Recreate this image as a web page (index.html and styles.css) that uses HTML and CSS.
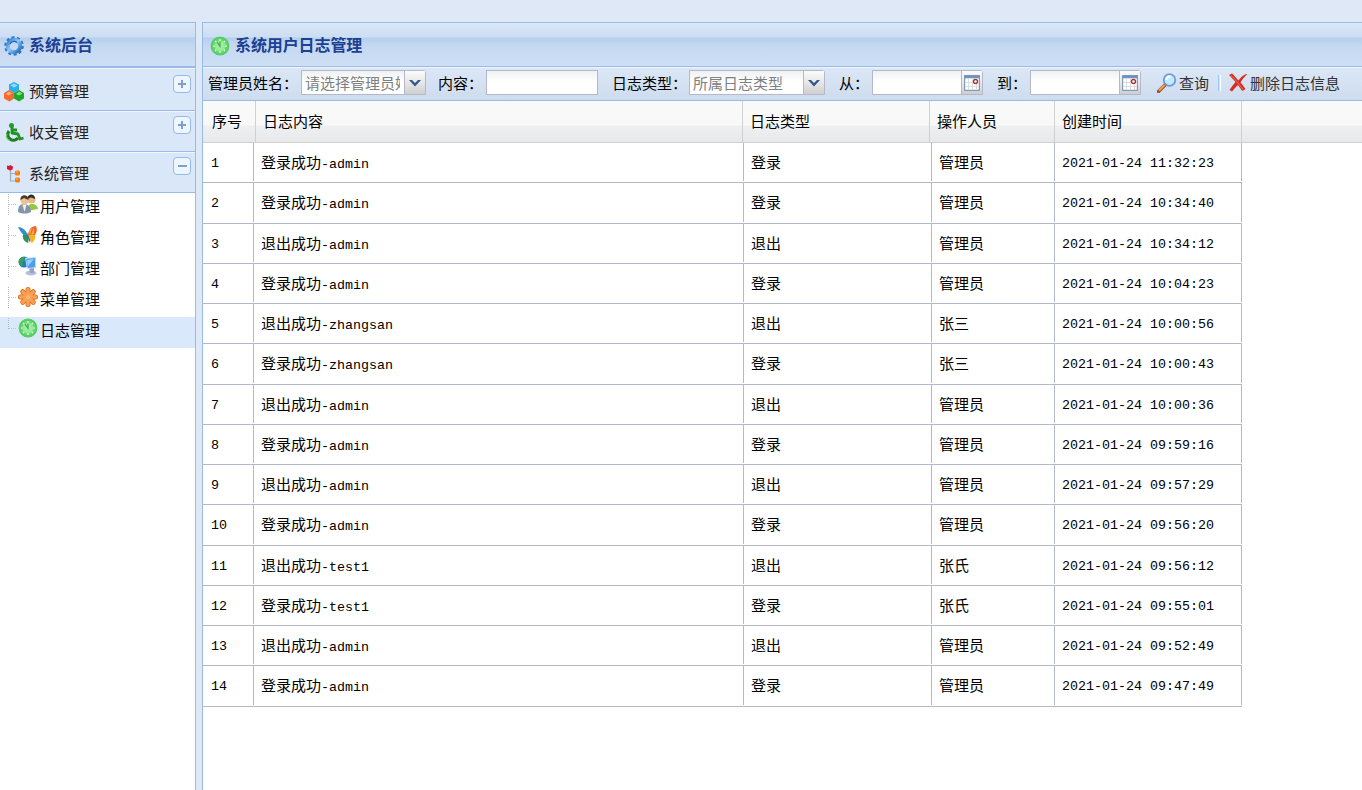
FILE: index.html
```
<!DOCTYPE html>
<html lang="zh-CN">
<head>
    <meta charset="UTF-8">
    <title>系统后台</title>
    <link rel="stylesheet" href="styles.css">
</head>
<body>
    <!-- shared icons -->
    <svg class="defs" width="0" height="0">
        <defs>
            <radialGradient id="greenBall"><stop offset="0" stop-color="#b9f5b4"/><stop offset="0.65" stop-color="#86e489"/><stop offset="1" stop-color="#3cc653"/></radialGradient>
            <linearGradient id="gearBlue" x1="0" y1="0" x2="1" y2="1"><stop offset="0" stop-color="#2f7bd2"/><stop offset="0.45" stop-color="#8fcaf8"/><stop offset="1" stop-color="#1d63b8"/></linearGradient>
            <symbol id="clock" viewBox="0 0 20 20">
                <circle cx="10" cy="10" r="8.8" fill="url(#greenBall)" stroke="#55cf63" stroke-width="1.2"/>
                <circle cx="10" cy="10" r="6.3" fill="none" stroke="#5fd26b" stroke-width="1"/>
                <path d="M10 3v2M10 15v2M3 10h2M15 10h2M5 5l1.300 1.300M15 5l-1.300 1.300M5 15l1.300-1.300M15 15l-1.300-1.300" stroke="#e4ffe2" stroke-width="1.200"/>
                <path d="M7 6l3 4.500V5.500" fill="none" stroke="#35ad4d" stroke-width="1.200"/>
            </symbol>
            <symbol id="calendar" viewBox="0 0 16 16">
                <rect x="0.500" y="0.500" width="15" height="15" rx="1" fill="#fff" stroke="#7c9cc0" stroke-width="1.400"/>
                <path d="M0.500 1.800h15" stroke="#6f93bd" stroke-width="3"/>
                <path d="M4.500 4v11M8.500 4v11M12.500 4v11M1 7.500h14M1 11.500h14" stroke="#dedede"/>
                <circle cx="11.500" cy="6.500" r="2" fill="#fff" stroke="#a8323b" stroke-width="1.400"/>
            </symbol>
        </defs>
    </svg>

    <div class="viewport">
        <div class="sidebar">
            <div class="panel-header">
                <svg width="20" height="20" viewBox="0 0 20 20">
                    <circle cx="10" cy="10" r="8.600" fill="none" stroke="#2f76ca" stroke-width="2.400" stroke-dasharray="3 2.400"/>
                    <circle cx="10" cy="10" r="6.200" fill="none" stroke="url(#gearBlue)" stroke-width="4"/>
                    <path d="M6 8a4.500 4.500 0 0 1 7-1.500" fill="none" stroke="#1d5cae" stroke-width="1.200"/>
                </svg>
                <span>系统后台</span>
            </div>
            <div class="accordion">
                <div class="accordion-item">
                    <svg width="20" height="20" viewBox="0 0 20 20">
                        <path d="M10 0l5 2.500v5.500l-5 3-5-3V2.500z" fill="#31aeea"/>
                        <path d="M5 8l5 3v5.500l-4.500 3L0 16.500V11z" fill="#f26a2c"/>
                        <path d="M15 8l5 3v5.500l-5 3-5-3V11z" fill="#1fa62c"/>
                        <path d="M6.500 3.500l3.500-2 3.500 2-3.500 2z" fill="#92e0ff"/>
                        <path d="M1.500 12L5 9.500 8 11.500l-3.500 2z" fill="#ffac7d"/>
                        <path d="M12 12l3-2.500 3.500 2-3.500 2z" fill="#7fe276"/>
                    </svg>
                    <span>预算管理</span>
                    <i class="tool plus"></i>
                </div>
                <div class="accordion-item">
                    <svg width="20" height="20" viewBox="0 0 20 20">
                        <circle cx="7.500" cy="2.500" r="2.500" fill="#279a2b"/>
                        <path d="M8 4v6l6 1 2 5 3.500-1M8 7h5" fill="none" stroke="#219326" stroke-width="2.800" stroke-linejoin="round"/>
                        <path d="M5 8a5.500 5.500 0 1 0 9 7" fill="none" stroke="#1c8024" stroke-width="3"/>
                        <path d="M3 11a4.500 4.500 0 0 0 3 6.500" fill="none" stroke="#64cc54" stroke-width="1.200"/>
                    </svg>
                    <span>收支管理</span>
                    <i class="tool plus"></i>
                </div>
                <div class="accordion-item">
                    <svg width="20" height="20" viewBox="0 0 20 20">
                        <path d="M6.500 5v12h5M6.500 9.500h5" fill="none" stroke="#9eacbd" stroke-width="1.200"/>
                        <path d="M3 1.500l2 .5 1-1 3 1.500-.5 3-2.500 1L3 5z" fill="#d8162c"/>
                        <rect x="11" y="6.500" width="5" height="5" rx="1.500" fill="#f77f0c"/>
                        <rect x="11" y="13.500" width="5" height="5" rx="1.500" fill="#f77f0c"/>
                        <path d="M12 8h2M12 15h2" stroke="#ffc15d"/>
                    </svg>
                    <span>系统管理</span>
                    <i class="tool"></i>
                </div>
            </div>
            <div class="tree">
                <div class="tree-node">
                    <i class="elbow"></i>
                    <svg width="20" height="20" viewBox="0 0 20 20">
                        <path d="M9 17c0-5 2-7 5-7s6 2 6 5z" fill="#93c842"/>
                        <circle cx="13.500" cy="5.500" r="4" fill="#e5b982"/>
                        <path d="M9.500 5c-.5-6 8-6 7.500 0-2-.5-3-1.500-4-1.500z" fill="#33302c"/>
                        <path d="M0 18c0-6 2-8 6-8s7 3 7 8c-4 2-9 2-13 0z" fill="#8595a7"/>
                        <path d="M4.500 10.500L6.500 18l2-7.500z" fill="#f1f5f8"/>
                        <circle cx="6.500" cy="6.500" r="4" fill="#edc490"/>
                        <path d="M2.500 6C1.500-.5 11-.5 10.500 6L6 4z" fill="#493b2a"/>
                    </svg>
                    <span>用户管理</span>
                </div>
                <div class="tree-node">
                    <i class="elbow"></i>
                    <svg width="20" height="20" viewBox="0 0 20 20">
                        <path d="M0 2c4 0 8 3 10 8L7 12C5 9 3 8 0 2z" fill="#2e91c9"/>
                        <path d="M5 10l5 0v8c-3-1-6-4-5-8z" fill="#28965a"/>
                        <path d="M10 11c0-6 3-10 8-10 2 4 0 8-2 10z" fill="#ef672b"/>
                        <path d="M12 10l2-8-3 4zM16 2l-3 8 3-1z" fill="#f5b14a"/>
                        <path d="M10 10h7c1 3-1 6-3 8-2-2-4-4-4-8z" fill="#f5b51e"/>
                        <path d="M9 7l2 11 1-3z" fill="#2761ac"/>
                    </svg>
                    <span>角色管理</span>
                </div>
                <div class="tree-node">
                    <i class="elbow"></i>
                    <svg width="20" height="20" viewBox="0 0 20 20">
                        <ellipse cx="13" cy="17" rx="5.500" ry="2.500" fill="#b8bddd"/>
                        <path d="M11 11l5 1v5h-4z" fill="#999fcd"/>
                        <circle cx="6" cy="6" r="5.500" fill="#237ac9"/>
                        <path d="M1 4c2-3 4-3 5-3l1 3-3 2 1 4C2 10 0 7 1 4z" fill="#37a447"/>
                        <path d="M7 2l11-1v11l-9 1z" fill="#c3d8ee"/>
                        <path d="M8 3l9-1v9l-7 1z" fill="#4d9fee"/>
                        <path d="M9 4l7-1-6 7z" fill="#93d5ff"/>
                    </svg>
                    <span>部门管理</span>
                </div>
                <div class="tree-node">
                    <i class="elbow"></i>
                    <svg width="20" height="20" viewBox="0 0 20 20">
                        <path d="M10 2.500v15M2.500 10h15M4.700 4.700l10.600 10.600M15.300 4.700L4.700 15.300" stroke="#d96f1c" stroke-width="5" stroke-linecap="round"/>
                        <path d="M10 2.500v15M2.500 10h15M4.700 4.700l10.600 10.600M15.300 4.700L4.700 15.300" stroke="#f9a052" stroke-width="3.400" stroke-linecap="round"/>
                        <circle cx="10" cy="10" r="2" fill="#fcb878"/>
                    </svg>
                    <span>菜单管理</span>
                </div>
                <div class="tree-node selected">
                    <i class="elbow last"></i>
                    <svg width="20" height="20"><use href="#clock"/></svg>
                    <span>日志管理</span>
                </div>
            </div>
        </div>

        <div class="main">
            <div class="panel-header">
                <svg width="20" height="20"><use href="#clock"/></svg>
                <span>系统用户日志管理</span>
            </div>
            <div class="toolbar">
                <label class="w-name">管理员姓名：</label>
                <div class="field combo w-admin">
                    <span>请选择管理员姓名</span>
                    <b><svg width="12" height="8" viewBox="0 0 12 8"><path d="M0 1h3l3 3 3-3h3L6 7.500z" fill="#34548f"/></svg></b>
                </div>
                <label class="w-content">内容：</label>
                <div class="field w-text"></div>
                <label class="w-type">日志类型：</label>
                <div class="field combo w-logtype">
                    <span>所属日志类型</span>
                    <b><svg width="12" height="8" viewBox="0 0 12 8"><path d="M0 1h3l3 3 3-3h3L6 7.500z" fill="#34548f"/></svg></b>
                </div>
                <label class="w-date-label">从：</label>
                <div class="field combo w-date"><span></span><b><svg width="16" height="16"><use href="#calendar"/></svg></b></div>
                <label class="w-date-label">到：</label>
                <div class="field combo w-date"><span></span><b><svg width="16" height="16"><use href="#calendar"/></svg></b></div>
                <div class="button search">
                    <svg width="20" height="20" viewBox="0 0 20 20">
                        <path d="M8 12l-6.500 6.500" stroke="#9b5531" stroke-width="3.600" stroke-linecap="round"/>
                        <path d="M7.500 12L2 17.500" stroke="#f6a148" stroke-width="2"/>
                        <circle cx="12.500" cy="7" r="5.800" fill="#bfeaff" stroke="#719bd8" stroke-width="1.800"/>
                        <path d="M9.500 7a3.500 3.500 0 0 1 4-3.500" fill="none" stroke="#fff" stroke-width="2"/>
                    </svg>
                    <span>查询</span>
                </div>
                <i class="separator"></i>
                <div class="button">
                    <svg width="20" height="20" viewBox="0 0 20 20">
                        <path d="M1 2l3-1.500C7 3 9 6 10.500 7.500 13 4 16 1 19.500 1 16 4 14 7 12.500 9.500c2 2 3 4 5 6.500l-3 2c-2-2-3-4-4.500-6C8 14 6 16 4 18.500L1.500 17c2-3 4-5.500 6-8C5 6 3 4 1 2z" fill="#d62e20"/>
                        <path d="M3 2.500c3 2 9 10 12 14" fill="none" stroke="#f07560" stroke-width="1"/>
                    </svg>
                    <span>删除日志信息</span>
                </div>
            </div>

            <div class="grid">
                <div class="grid-header">
                    <span>序号</span><span>日志内容</span><span>日志类型</span><span>操作人员</span><span>创建时间</span>
                </div>
                <div class="row"><span class="num">1</span><span>登录成功<tt>-admin</tt></span><span>登录</span><span>管理员</span><span class="num">2021-01-24 11:32:23</span></div>
                <div class="row"><span class="num">2</span><span>登录成功<tt>-admin</tt></span><span>登录</span><span>管理员</span><span class="num">2021-01-24 10:34:40</span></div>
                <div class="row"><span class="num">3</span><span>退出成功<tt>-admin</tt></span><span>退出</span><span>管理员</span><span class="num">2021-01-24 10:34:12</span></div>
                <div class="row"><span class="num">4</span><span>登录成功<tt>-admin</tt></span><span>登录</span><span>管理员</span><span class="num">2021-01-24 10:04:23</span></div>
                <div class="row"><span class="num">5</span><span>退出成功<tt>-zhangsan</tt></span><span>退出</span><span>张三</span><span class="num">2021-01-24 10:00:56</span></div>
                <div class="row"><span class="num">6</span><span>登录成功<tt>-zhangsan</tt></span><span>登录</span><span>张三</span><span class="num">2021-01-24 10:00:43</span></div>
                <div class="row"><span class="num">7</span><span>退出成功<tt>-admin</tt></span><span>退出</span><span>管理员</span><span class="num">2021-01-24 10:00:36</span></div>
                <div class="row"><span class="num">8</span><span>登录成功<tt>-admin</tt></span><span>登录</span><span>管理员</span><span class="num">2021-01-24 09:59:16</span></div>
                <div class="row"><span class="num">9</span><span>退出成功<tt>-admin</tt></span><span>退出</span><span>管理员</span><span class="num">2021-01-24 09:57:29</span></div>
                <div class="row"><span class="num">10</span><span>登录成功<tt>-admin</tt></span><span>登录</span><span>管理员</span><span class="num">2021-01-24 09:56:20</span></div>
                <div class="row"><span class="num">11</span><span>退出成功<tt>-test1</tt></span><span>退出</span><span>张氏</span><span class="num">2021-01-24 09:56:12</span></div>
                <div class="row"><span class="num">12</span><span>登录成功<tt>-test1</tt></span><span>登录</span><span>张氏</span><span class="num">2021-01-24 09:55:01</span></div>
                <div class="row"><span class="num">13</span><span>退出成功<tt>-admin</tt></span><span>退出</span><span>管理员</span><span class="num">2021-01-24 09:52:49</span></div>
                <div class="row"><span class="num">14</span><span>登录成功<tt>-admin</tt></span><span>登录</span><span>管理员</span><span class="num">2021-01-24 09:47:49</span></div>
            </div>
        </div>
    </div>
</body>
</html>
```

FILE: styles.css
```
* {
    box-sizing: border-box;
}
body {
    margin: 0;
    height: 790px;
    overflow: hidden;
    background-color: #dfe8f6;
    font-family: "Noto Sans CJK SC", sans-serif;
    font-size: 15px;
    line-height: 20px;
    color: #000;
    white-space: nowrap;
}
svg {
    display: block;
    flex: none;
}
.viewport {
    display: flex;
    gap: 6px;
    height: 790px;
    padding-top: 22px;
}
.sidebar {
    width: 196px;
    background-color: #fff;
    border-top: 1px solid #99bbe8;
    border-right: 1px solid #99bbe8;
}
.main {
    flex: 1;
    min-width: 0;
    background-color: #fff;
    border-top: 1px solid #99bbe8;
    border-left: 1px solid #99bbe8;
}
.panel-header {
    display: flex;
    align-items: center;
    gap: 5px;
    height: 44px;
    padding: 2px 0 0 4px;
    background: linear-gradient(#dae7f6, #cddef3 14px, #b6cfee 15px, #c6d9f1 24px, #cedff5);
    border-bottom: 1px solid #99bbe8;
    color: #1c4092;
    font-size: 16px;
    font-weight: bold;
}
.panel-header span {
    margin-top: -3px;
}
.main .panel-header {
    padding-left: 7px;
    gap: 5px;
}
.main .panel-header span {
    letter-spacing: -0.1px;
}

/* sidebar */
.accordion {
    border-top: 1px solid #99bbe8;
}
.accordion-item {
    display: flex;
    align-items: center;
    gap: 5px;
    height: 41px;
    padding: 3px 4px 0;
    background-color: #d9e7f8;
    border-top: 1px solid #f3f7fb;
    border-bottom: 1px solid #99bbe8;
    color: #222;
}
.accordion-item span {
    margin-top: -3px;
}
.accordion-item:first-child {
    height: 43px;
    padding-top: 5px;
}
.tool {
    align-self: flex-start;
    width: 18px;
    height: 18px;
    margin: 1px 0 0 auto;
    border: 1px solid #94b9e8;
    border-radius: 4px;
    background: linear-gradient(#7f9fc8, #7f9fc8) center / 9px 2px no-repeat, #edf5fe;
}
.tool.plus {
    background: linear-gradient(#7f9fc8, #7f9fc8) center / 8px 2px no-repeat, linear-gradient(#7f9fc8, #7f9fc8) center / 2px 8px no-repeat, #edf5fe;
}
.tree-node {
    display: flex;
    align-items: flex-start;
    height: 31px;
    padding: 1px 0 0 8px;
}
.tree-node span {
    margin: 2px 0 0 2px;
}
.tree-node.selected {
    background-color: #d9e8fb;
}
.elbow {
    width: 10px;
    height: 21px;
    border-left: 1px dotted #b9b9b9;
    background: repeating-linear-gradient(90deg, #c4c4c4 0 1px, transparent 1px 2px) 0 10px / 8px 1px no-repeat;
}
.elbow.last {
    height: 11px;
}

/* search toolbar */
.toolbar {
    display: flex;
    align-items: center;
    height: 34px;
    padding: 0 0 3px 5px;
    background: linear-gradient(#dbe7f5, #cedcef);
    border-top: 1px solid #eef4fb;
    border-bottom: 1px solid #99bbe8;
}
.toolbar label {
    flex: none;
}
.w-name { width: 93px; }
.w-content { width: 48px; }
.w-type { width: 77px; }
.w-date-label { width: 33px; }
.field {
    flex: none;
    height: 25px;
    margin-right: 14px;
    border: 1px solid #b5b8c8;
    background: linear-gradient(#eef1f2, #fff 11px);
    color: #808080;
}
.w-admin {
    width: 125px;
    margin-right: 12px;
}
.w-text { width: 112px; }
.w-logtype { width: 136px; }
.w-date { width: 111px; }
.combo {
    display: flex;
    border-top-right-radius: 3px;
}
.combo span {
    flex: 1;
    overflow: hidden;
    margin: 2px 4px 0 3px;
}
.combo b {
    display: flex;
    align-items: center;
    justify-content: center;
    width: 21px;
    border-left: 1px solid #b5b8c8;
    background: linear-gradient(#fbfbfb, #e7e7e7 50%, #cfcfcf);
}
.button {
    display: flex;
    gap: 2px;
    color: #333;
}
.button.search {
    margin-left: 2px;
}
.separator {
    width: 3px;
    height: 16px;
    margin: 0 7px 0 9px;
    border-left: 1px solid #98c8ff;
    border-right: 1px solid #fff;
}

/* log grid */
.grid-header {
    display: grid;
    grid-template-columns: 53px 487px 187px 125px 187px;
    height: 42px;
    background: linear-gradient(#fafafa, #f8f8f8 24px, #eeeff0 25px, #e8e9eb);
    border-bottom: 1px solid #d0d0d0;
}
.grid-header span {
    padding: 10px 0 0 7px;
    border-right: 1px solid #d0d0d0;
}
.grid-header span:first-child {
    padding-left: 9px;
}
.row {
    display: grid;
    grid-template-columns: 51px 490px 188px 123px 187px;
    width: 1039px;
    height: 40.250px;
    padding-bottom: 1px;
    border-bottom: 1px solid #b5b8c8;
}
.row span {
    padding: 9px 0 0 7px;
    border-right: 1px solid #b5b8c8;
}
.row span:first-child {
    padding-left: 8px;
}
.row .num,
.row tt {
    font-family: "Liberation Mono", monospace;
    font-size: 13.330px;
}
.row tt {
    line-height: 1;
}
.row .num {
    padding-top: 11px;
}
.defs {
    position: absolute;
}
```
